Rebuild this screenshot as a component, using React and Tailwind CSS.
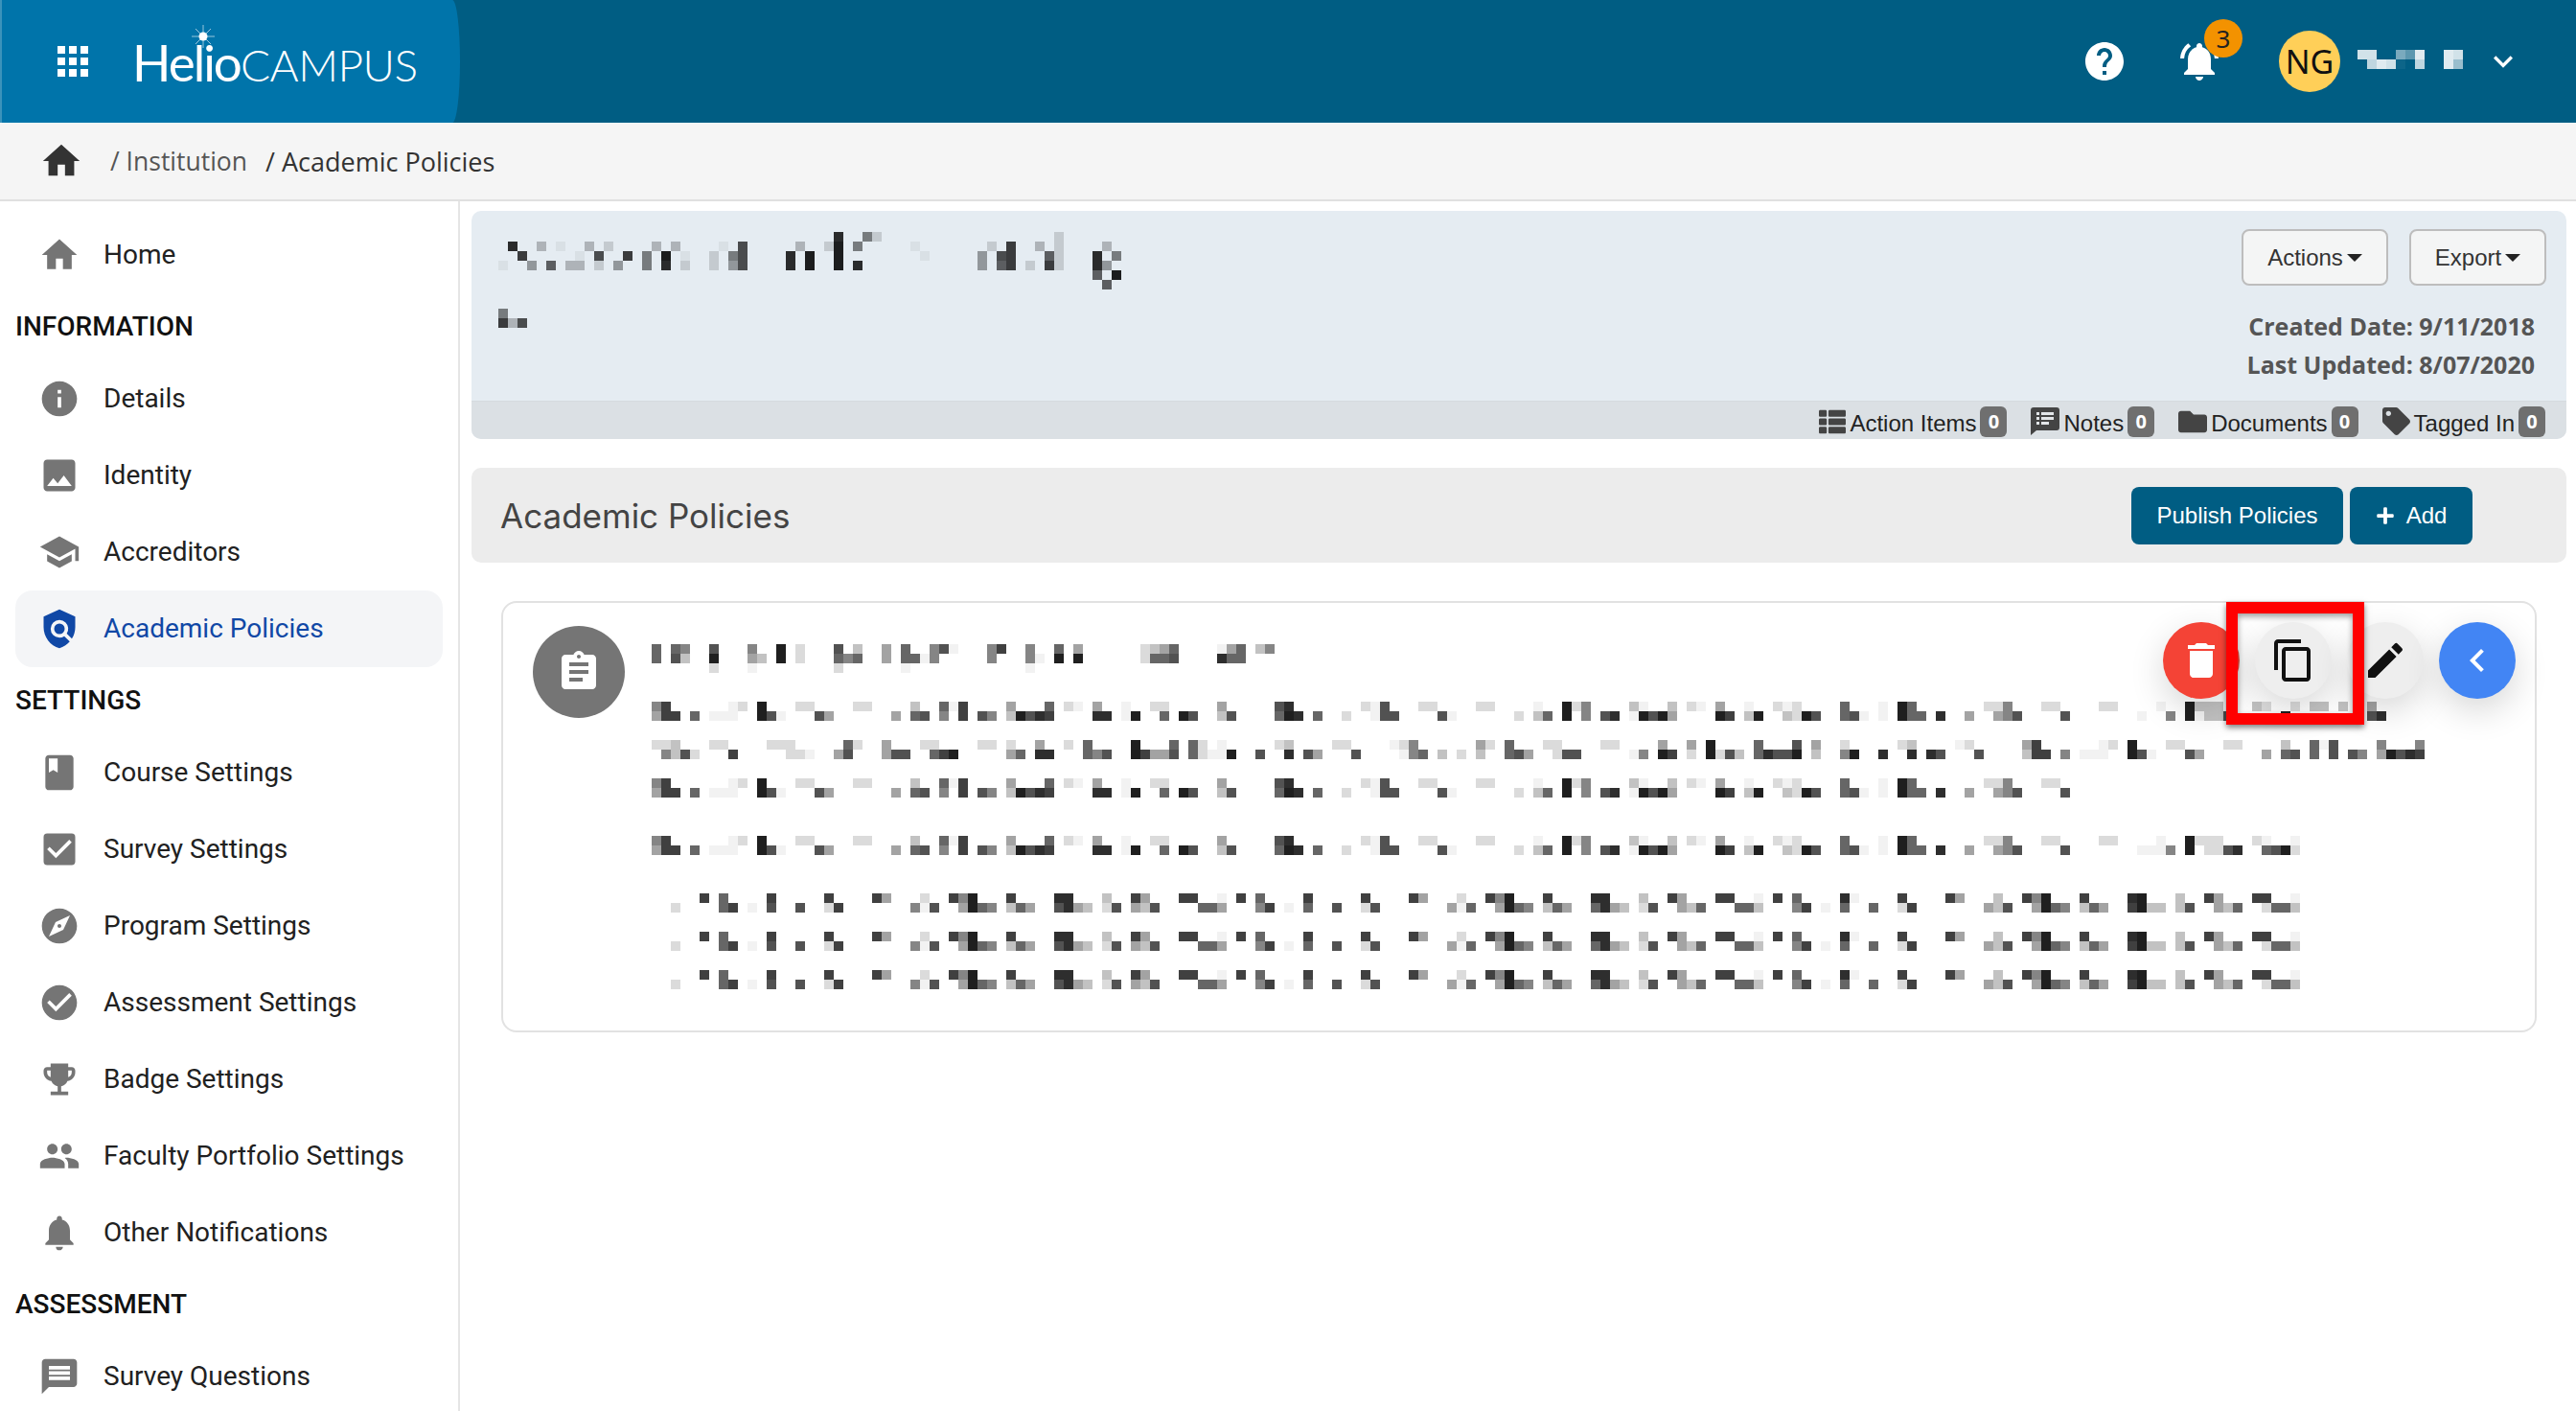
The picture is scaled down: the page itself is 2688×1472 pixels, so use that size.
import React from 'react';
import {
  MdHome, MdInfo, MdImage, MdSchool, MdPolicy, MdBook, MdCheckBox, MdExplore, MdCheckCircle,
  MdEmojiEvents, MdPeople, MdNotifications, MdMessage, MdAssignment, MdApps, MdHelp,
  MdNotificationsActive, MdKeyboardArrowDown, MdDelete, MdContentCopy, MdEdit, MdChevronLeft,
} from 'react-icons/md';
import { FaThList, FaFolder, FaTag, FaPlus } from 'react-icons/fa';

// redacted text in the reference is a 10px mosaic: "column:shade" pairs per row
const SHADE = { a: 0.05, 1: 0.14, 2: 0.24, 3: 0.36, 4: 0.48, 5: 0.6, 6: 0.68, 7: 0.75, 8: 0.82, 9: 0.88 };

function Mosaic({ rows, width, color = '#000' }) {
  const rects = [];
  rows.forEach((segments, y) => {
    segments.forEach(([offset, text]) => {
      text.split(' ').forEach((pair) => {
        const [col, shade] = pair.split(':');
        rects.push(
          <rect key={`${y}-${offset}-${col}`} x={(offset + Number(col)) * 10} y={y * 10} width="10" height="10" fill={color} fillOpacity={SHADE[shade]} />
        );
      });
    });
  });
  return (
    <svg className="block shrink-0" width={width} height={rows.length * 10} shapeRendering="crispEdges">
      {rects}
    </svg>
  );
}

const PARA_TOP = [
  [0, '0:4 1:7 8:a 9:1 11:9 15:1 16:1 21:1 22:1 27:2 30:5 31:a 32:7 37:3 41:5 43:1 44:a 46:3 49:a 52:1 53:1 59:3 65:6 66:8'],
  [72, '2:1 3:a 4:6 8:1 9:1 14:1 15:1 20:a 23:9 24:1 25:4 30:2 31:a 34:2 36:1 37:a 39:3 42:a 45:1 46:a 47:1'],
  [124, '0:5 4:a 6:9 7:5 15:1 16:1 17:4 21:1 22:1'],
];
const PARA_BOTTOM = [
  [0, '0:3 1:7 2:7 4:5 6:a 7:a 8:a 11:9 12:6 13:a 17:6 18:3 25:3 27:5 28:6 30:4 32:7 34:6 35:4 37:2 38:9 39:6 40:8 41:7 46:8 47:8 49:a 50:9 53:5 55:9 56:6 59:2 60:6 65:5 66:9 67:8 69:5'],
  [72, '0:1 3:a 4:6 5:6 10:6 11:a 18:1 20:2 21:5 23:9 25:4 27:6 28:8 30:a 31:9 32:6 33:9 34:3 39:9 40:7 42:2 43:9 46:2 47:1 48:9 49:6'],
  [124, '0:5 1:6 2:a 4:a 6:9 7:5 8:5 10:8 13:3 16:3 17:4 18:6 23:6'],
];

const LINE_1 = [
  [...PARA_TOP, [124, '27:1 28:1 33:a 36:9 37:2 38:2 39:2 43:2 44:1 47:1 49:2 50:2 52:2 55:3']],
  [...PARA_BOTTOM, [124, '31:a 34:4 36:9 37:a 38:2 39:2 40:6 46:9 55:6 56:8']],
];
const LINE_2 = [
  [
    [0, '0:1 1:1 2:2 6:1 7:1 12:1 13:1 14:1 20:5 21:1 24:3 28:1 29:1 34:1 35:1 37:1 40:3 43:1 45:5 50:9 54:5 56:5 57:1 59:a 65:1 66:2 71:1'],
    [72, '0:1 5:a 6:1 7:4 14:3 15:1 17:5 21:1 22:1 27:1 28:1 33:3 36:3 38:9 43:5 47:6 49:3'],
    [124, '0:1 6:1 7:2 12:a 13:1 19:3 20:7 27:a 28:1 30:9 34:1 35:1 40:1 41:1 46:2 49:5 50:a 51:6 56:4 60:4'],
  ],
  [
    [0, '1:4 2:2 3:6 4:1 8:7 14:1 15:1 16:a 19:3 20:6 24:3 25:6 26:6 29:5 30:7 31:9 37:3 38:5 40:8 41:8 45:5 46:4 47:6 50:9 51:7 52:3 53:3 54:6 56:5 57:1 58:a 59:a 60:9 63:6 66:8 68:6 69:3'],
    [72, '1:6 6:a 7:4 8:5 10:2 12:1 14:2 17:5 18:6 19:3 22:1 23:6 24:6 30:a 31:4 33:9 34:7 36:1 38:9 39:1 40:6 41:2 43:5 44:8 45:6 46:6 47:9 49:2'],
    [124, '0:4 1:9 4:8 7:8 9:8 10:6 14:6 19:2 20:7 21:7 23:4 25:a 26:a 27:a 30:9 31:6 32:a 36:6 37:3 44:3 46:5 47:6 49:5 51:6 53:6 54:4 56:3 57:9 58:6 59:8 60:7'],
  ],
];
const LINE_3 = [PARA_TOP, PARA_BOTTOM];
const LINE_4 = [
  [...PARA_TOP, [124, '27:1 28:1 33:a 36:9 37:1 38:1 39:1 43:1 44:a 47:a']],
  [...PARA_BOTTOM, [124, '31:a 32:a 33:a 34:4 36:9 38:1 39:1 40:6 41:8 44:5 45:6 46:9 47:1']],
];
const LINE_5 = [
  [
    [0, '5:7 7:5 12:7 18:7 23:7 24:3 28:1 31:7 32:4 33:9 37:7 42:8 43:8 47:2 50:7 51:3 55:7 56:7 59:a 61:7 63:5 68:7'],
    [72, '2:7 7:7 8:3 12:1 15:7 16:4 17:9 21:7 26:8 27:8 31:2 34:7 35:3 39:7 40:7 43:a 45:7 47:5'],
    [124, '0:8 1:a 6:7 11:7 12:3 16:2 19:7 20:4 21:9 25:7 30:8 31:9 35:2 38:7 39:3 43:7 44:7 47:a'],
  ],
  [
    [0, '2:1 7:5 8:7 10:a 12:6 15:6 18:1 19:7 27:4 28:a 29:6 32:3 33:9 34:5 35:4 37:2 38:5 39:3 42:6 43:8 44:3 45:2 47:1 48:6 50:3 51:2 52:6 57:5 58:5 59:3 63:4 64:7 66:a 68:5 71:6'],
    [72, '2:1 3:6 11:3 12:a 13:5 16:3 17:9 18:5 19:4 21:2 22:5 23:3 26:5 27:8 28:3 29:2 31:1 32:6 35:3 36:2 37:5 41:5 42:5 43:2 47:4 48:7 50:a'],
    [124, '0:5 3:5 6:1 7:7 15:3 16:2 17:6 20:3 21:9 22:5 23:4 25:2 26:5 27:3 30:7 31:9 32:2 33:2 35:2 36:6 39:3 40:2 41:5 44:1 45:5 46:5 47:2'],
  ],
];
const CARD_TITLE = [
  [[0, '0:5 2:5 3:4 6:6 10:4 13:9 15:1 19:6 21:2 24:3 26:5 29:4 30:6 31:a 35:4 36:7 39:4 42:5 44:3 51:1 52:2 53:3 54:5 59:a 60:3 61:5 63:2 64:4']],
  [[0, '0:5 2:6 3:2 6:9 10:3 11:2 13:9 15:1 19:5 20:4 21:5 24:3 26:5 27:5 28:a 29:4 35:4 39:4 40:a 42:9 44:9 51:1 52:5 53:5 54:6 59:8 60:5 61:5']],
  [[0, '6:1 10:a 19:1 26:a 39:a']],
];
const BANNER_TITLE = [
  [[0, '35:8 38:4 39:1 58:1']],
  [[0, '1:8 4:2 6:a 9:2 11:1 16:2 18:2 23:a 25:6 31:2 34:1 35:9 37:4 43:a 51:1 53:7 56:2 58:1 63:2']],
  [[0, '2:7 8:a 10:6 13:7 15:4 17:9 19:a 22:1 24:4 25:6 30:8 32:9 35:9 44:a 50:3 52:6 53:7 57:5 58:1 62:8 64:4']],
  [[0, '0:a 3:3 5:5 7:2 8:2 10:1 12:3 15:4 17:8 19:1 22:1 24:3 25:6 30:8 32:9 35:9 37:8 50:3 52:5 53:7 55:1 57:7 58:1 62:8 63:3']],
  [[0, '62:5 64:9']],
  [[0, '63:5']],
];
const BANNER_SUB = [[[0, '0:4']], [[0, '0:7 1:2 2:6']]];
const USER_NAME = [
  [[0, '0:8 1:8 4:4 5:3 6:9 9:9 10:8']],
  [[0, '1:7 2:9 3:8 4:a 6:7 9:9 10:5']],
];

const NAV = [
  { type: 'item', label: 'Home', icon: MdHome },
  { type: 'head', label: 'INFORMATION' },
  { type: 'item', label: 'Details', icon: MdInfo },
  { type: 'item', label: 'Identity', icon: MdImage },
  { type: 'item', label: 'Accreditors', icon: MdSchool },
  { type: 'item', label: 'Academic Policies', icon: MdPolicy, active: true },
  { type: 'head', label: 'SETTINGS' },
  { type: 'item', label: 'Course Settings', icon: MdBook },
  { type: 'item', label: 'Survey Settings', icon: MdCheckBox },
  { type: 'item', label: 'Program Settings', icon: MdExplore },
  { type: 'item', label: 'Assessment Settings', icon: MdCheckCircle },
  { type: 'item', label: 'Badge Settings', icon: MdEmojiEvents },
  { type: 'item', label: 'Faculty Portfolio Settings', icon: MdPeople },
  { type: 'item', label: 'Other Notifications', icon: MdNotifications },
  { type: 'head', label: 'ASSESSMENT' },
  { type: 'item', label: 'Survey Questions', icon: MdMessage },
];

function NotesIcon() {
  return (
    <svg width="30" height="29" viewBox="0 0 30 29" className="shrink-0">
      <path d="M3 0h24a3 3 0 0 1 3 3v18a3 3 0 0 1-3 3H6l-6 5V3a3 3 0 0 1 3-3z" fill="#444" />
      <path d="M6 5h3v3H6zM11 5h13v3H11zM6 10h3v3H6zM11 10h13v3H11zM6 15h3v3H6zM11 15h8v3h-8z" fill="#e2e5e8" />
    </svg>
  );
}

function StripItem({ icon, label }) {
  return (
    <div className="flex items-center gap-1">
      {icon}
      <span className="pt-1 text-2xl leading-8 text-[#222] font-['Liberation_Sans',sans-serif]">{label}</span>
      <span className="flex h-8 w-7 items-center justify-center rounded-md bg-[#6f6f6f] text-xl font-bold text-white font-['Open_Sans',sans-serif]">0</span>
    </div>
  );
}

function GreyButton({ label, width }) {
  return (
    <button className={`flex h-[59px] ${width} items-center justify-center gap-1 rounded-lg border-2 border-[#bdbdbd] bg-[#f4f5f5] pt-px text-2xl text-[#333] font-['Liberation_Sans',sans-serif]`}>
      {label}
      <span className="h-0 w-0 border-x-8 border-t-8 border-x-transparent border-t-[#222]" />
    </button>
  );
}

function Sidebar() {
  return (
    <nav className="w-[480px] shrink-0 border-r-2 border-[#e5e5e5] pt-4 font-['Roboto',sans-serif]">
      {NAV.map((entry) => {
        if (entry.type === 'head') {
          return (
            <div key={entry.label} className="flex h-[70px] items-center pl-4 text-[28px] font-medium text-[#111]">
              {entry.label}
            </div>
          );
        }
        const Icon = entry.icon;
        return (
          <div
            key={entry.label}
            className={`ml-4 mr-4 flex h-20 items-center gap-6 rounded-[18px] pl-6 text-[28px] ${
              entry.active ? 'bg-[#f4f5f7] text-[#1048a6]' : 'text-[#212121]'
            }`}
          >
            <Icon size={44} className={`shrink-0 ${entry.active ? 'text-[#1048a6]' : 'text-[#757575]'}`} />
            {entry.label}
          </div>
        );
      })}
    </nav>
  );
}

export default function App() {
  return (
    <div className="flex h-[1472px] w-[2688px] flex-col overflow-hidden bg-white">
      <header className="flex h-32 shrink-0 items-center bg-[#005d83]">
        <div className="flex h-full w-[480px] shrink-0 items-center rounded-r-[8px_64px] border-l-2 border-[#3b93bb] bg-[#0074aa]">
          <MdApps size={48} className="ml-[50px] text-white" />
          <div className="relative ml-[38px] flex items-baseline text-white font-['Lato',sans-serif]">
            <span className="text-[53px] leading-none tracking-[-2px] font-normal">Helio</span>
            <span className="text-[46px] leading-none font-light tracking-[-0.5px]">CAMPUS</span>
            <svg className="absolute left-[60px] top-[-14px]" width="28" height="28" viewBox="0 0 28 28">
              <circle cx="14" cy="14" r="4.5" fill="#fff" />
              <path d="M14 2v24M2 14h24M6 6l16 16M22 6L6 22" stroke="#fff" strokeWidth="1" opacity="0.6" />
            </svg>
          </div>
        </div>
        <div className="ml-auto flex items-center">
          <MdHelp size={48} className="text-white" />
          <div className="relative ml-[51px]">
            <MdNotificationsActive size={48} className="text-white" />
            <span className="absolute left-[29px] top-[-20px] flex h-10 w-10 items-center justify-center rounded-full bg-[#f39200] text-[26px] text-[#222] font-['Noto_Sans',sans-serif]">3</span>
          </div>
          <div className="ml-[59px] flex h-16 w-16 items-center justify-center rounded-full bg-[#ffcf58] text-[34px] text-[#111] font-['Noto_Sans',sans-serif]">NG</div>
          <div className="-mt-1 ml-[18px]">
            <Mosaic rows={USER_NAME} width={110} color="#fff" />
          </div>
          <MdKeyboardArrowDown size={40} className="ml-[22px] mr-14 text-white" />
        </div>
      </header>

      <div className="flex h-[82px] shrink-0 items-center border-b-2 border-[#e0e0e0] bg-[#f5f5f5] pl-[41px] font-['Open_Sans',sans-serif]">
        <MdHome size={46} className="text-[#333]" />
        <span className="ml-[28px] pt-[2px] text-[26.5px] text-[#555]">/ Institution</span>
        <span className="ml-[19px] pt-[2px] text-[27px] text-[#333]">/ Academic Policies</span>
      </div>

      <div className="flex min-h-0 flex-1">
        <Sidebar />
        <main className="min-w-0 flex-1 pl-3 pr-[10px] pt-[10px]">
          <section className="flex h-[238px] flex-col overflow-hidden rounded-[10px] bg-[#e5ecf2]">
            <div className="flex flex-1 justify-between">
              <div className="pl-7 pt-[22px]">
                <Mosaic rows={BANNER_TITLE} width={660} />
                <div className="mt-5">
                  <Mosaic rows={BANNER_SUB} width={40} />
                </div>
              </div>
              <div className="flex flex-col items-end pr-[21px] pt-[19px]">
                <div className="flex gap-[22px]">
                  <GreyButton label="Actions" width="w-[153px]" />
                  <GreyButton label="Export" width="w-[143px]" />
                </div>
                <div className="mt-[22px] pr-3 text-right text-[25px] font-bold leading-10 text-[#555] font-['Open_Sans',sans-serif]">
                  <div>Created Date: 9/11/2018</div>
                  <div>Last Updated: 8/07/2020</div>
                </div>
              </div>
            </div>
            <div className="flex h-10 items-center justify-end gap-[25px] border-t border-[#d5dade] bg-[#dbe0e4] pr-[22px] pt-[2px]">
              <StripItem icon={<FaThList size={28} className="text-[#444]" />} label="Action Items" />
              <StripItem icon={<NotesIcon />} label="Notes" />
              <StripItem icon={<FaFolder size={30} className="text-[#444]" />} label="Documents" />
              <StripItem icon={<FaTag size={29} className="text-[#444]" />} label="Tagged In" />
            </div>
          </section>

          <section className="mt-[30px] flex h-[99px] items-center justify-between rounded-[10px] bg-[#ececec] pl-[30px] pr-[98px]">
            <h1 className="pt-px text-[35px] font-normal text-[#444] font-['Inter',sans-serif]">Academic Policies</h1>
            <div className="flex gap-[7px] text-2xl text-white font-['Liberation_Sans',sans-serif]">
              <button className="h-[60px] w-[221px] rounded-lg bg-[#005d83] pt-px">Publish Policies</button>
              <button className="flex h-[60px] w-32 items-center justify-center gap-3 rounded-lg bg-[#005d83] pt-px">
                <FaPlus size={20} />
                Add
              </button>
            </div>
          </section>

          <section className="relative mx-[31px] mt-10 flex h-[450px] items-start gap-7 rounded-2xl border-2 border-[#e2e2e2] pl-[31px]">
            <div className="mt-6 flex h-24 w-24 shrink-0 items-center justify-center rounded-full bg-[#757575]">
              <MdAssignment size={48} className="text-white" />
            </div>
            <div className="flex flex-col pt-[43px]">
              <Mosaic rows={CARD_TITLE} width={660} />
              <div className="mt-[30px] flex flex-col gap-5">
                <Mosaic rows={LINE_1} width={1850} />
                <Mosaic rows={LINE_2} width={1850} />
                <Mosaic rows={LINE_3} width={1850} />
              </div>
              <div className="mt-10">
                <Mosaic rows={LINE_4} width={1850} />
              </div>
              <div className="mt-10 flex flex-col gap-5">
                <Mosaic rows={LINE_5} width={1850} />
                <Mosaic rows={LINE_5} width={1850} />
                <Mosaic rows={LINE_5} width={1850} />
              </div>
            </div>

            <div className="absolute right-5 top-5 flex gap-4">
              <button className="flex h-20 w-20 items-center justify-center rounded-full bg-[#f44336] text-white shadow-[0_12px_36px_rgba(0,0,0,0.16)]">
                <MdDelete size={48} />
              </button>
              <button className="flex h-20 w-20 items-center justify-center rounded-full bg-[#eeeeee] text-[#111] shadow-[0_12px_36px_rgba(0,0,0,0.16)]">
                <MdContentCopy size={48} />
              </button>
              <button className="flex h-20 w-20 items-center justify-center rounded-full bg-[#eeeeee] text-[#111] shadow-[0_12px_36px_rgba(0,0,0,0.16)]">
                <MdEdit size={48} />
              </button>
              <button className="flex h-20 w-20 items-center justify-center rounded-full bg-[#4285f4] text-white shadow-[0_12px_36px_rgba(0,0,0,0.16)]">
                <MdChevronLeft size={48} />
              </button>
            </div>
            <div className="absolute right-[178px] top-[-1px] h-32 w-36 border-12 border-[#ff0000] shadow-[0_3px_6px_rgba(0,0,0,0.5),inset_0_3px_6px_rgba(0,0,0,0.4)]" />
          </section>
        </main>
      </div>
    </div>
  );
}
